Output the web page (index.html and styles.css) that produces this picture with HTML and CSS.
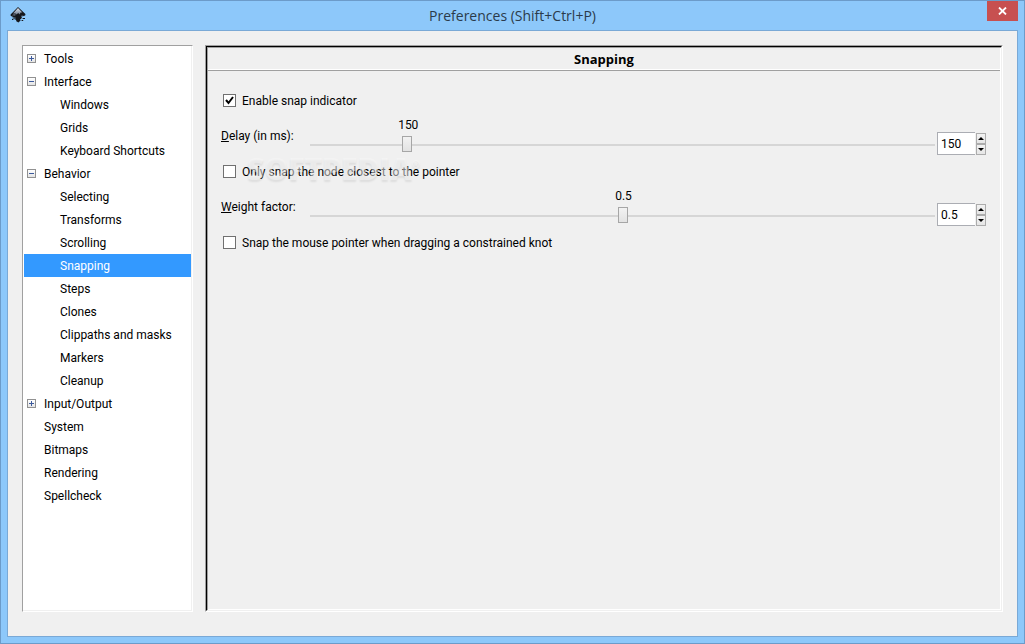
FILE: index.html
```
<!DOCTYPE html>
<html lang="en">
<head>
<meta charset="UTF-8">
<title>Preferences (Shift+Ctrl+P)</title>
<link rel="stylesheet" href="styles.css">
</head>
<body>
<div class="window">
  <header class="titlebar">
    <svg class="logo" viewBox="0 0 16 16" aria-hidden="true">
      <defs>
        <linearGradient id="peak" x1="0" y1="0" x2="0" y2="1">
          <stop offset="0" stop-color="#e4eaf4"/>
          <stop offset="1" stop-color="#6f7a8c"/>
        </linearGradient>
      </defs>
      <path fill="#15171c" d="M8 0 L15.4 7 Q16 8.6 14 9 L11 9.4 L12 10.6 L11 12 L10 12.2 L10.6 13.6 L8.4 15.6 L6 14 L6.4 13 L4 12 L6 11 L2 9.6 Q0 9 0.6 7.4 Z"/>
      <path fill="url(#peak)" d="M8 1 L12.4 5.4 L10.6 5.6 L9.6 7.4 L8.2 6 L6.6 7.6 L5.4 6.6 L3 6.6 Z"/>
      <path fill="#5d6676" d="M1.8 8.2 L4 7 L6 7.6 L5 8.8 Z M11 8 L14 8.2 L12 8.8 Z"/>
      <path fill="#15171c" d="M12.6 11 h2.4 v1 h-2.4 z M2 12 h1.4 v1 h-1.4 z M11.6 13 h1.6 v1 h-1.6 z M2.6 10.4 h2.4 v1 h-2.4 z"/>
    </svg>
    <h1>Preferences (Shift+Ctrl+P)</h1>
    <button class="close" aria-label="Close">
      <svg viewBox="0 0 9 8" width="9" height="8"><path d="M1 0.5 L8 7.5 M8 0.5 L1 7.5" stroke="#fff" stroke-width="1.8"/></svg>
    </button>
  </header>

  <div class="client">
    <nav class="tree">
      <ul>
        <li><div class="row"><button class="expander plus" aria-label="Expand Tools"></button><a href="#">Tools</a></div></li>
        <li>
          <div class="row"><button class="expander" aria-label="Collapse Interface"></button><a href="#">Interface</a></div>
          <ul>
            <li class="row child"><a href="#">Windows</a></li>
            <li class="row child"><a href="#">Grids</a></li>
            <li class="row child"><a href="#">Keyboard Shortcuts</a></li>
          </ul>
        </li>
        <li>
          <div class="row"><button class="expander" aria-label="Collapse Behavior"></button><a href="#">Behavior</a></div>
          <ul>
            <li class="row child"><a href="#">Selecting</a></li>
            <li class="row child"><a href="#">Transforms</a></li>
            <li class="row child"><a href="#">Scrolling</a></li>
            <li class="row child selected"><a href="#" aria-current="page">Snapping</a></li>
            <li class="row child"><a href="#">Steps</a></li>
            <li class="row child"><a href="#">Clones</a></li>
            <li class="row child"><a href="#">Clippaths and masks</a></li>
            <li class="row child"><a href="#">Markers</a></li>
            <li class="row child"><a href="#">Cleanup</a></li>
          </ul>
        </li>
        <li><div class="row"><button class="expander plus" aria-label="Expand Input/Output"></button><a href="#">Input/Output</a></div></li>
        <li class="row leaf"><a href="#">System</a></li>
        <li class="row leaf"><a href="#">Bitmaps</a></li>
        <li class="row leaf"><a href="#">Rendering</a></li>
        <li class="row leaf"><a href="#">Spellcheck</a></li>
      </ul>
    </nav>

    <main class="panel">
      <div class="panel-inner">
        <h2>Snapping</h2>
        <form class="settings">
          <div class="check">
            <input type="checkbox" id="indicator" checked>
            <label for="indicator">Enable snap indicator</label>
          </div>
          <div class="scale">
            <label for="delay"><u>D</u>elay (in ms):</label>
            <div class="slider" style="--pos: 0.15">
              <output for="delay">150</output>
              <input type="range" id="delay" min="0" max="1000" value="150">
            </div>
            <div class="spin">
              <input type="text" value="150" aria-label="Delay value">
              <div class="arrows">
                <button type="button" class="up" aria-label="Increase delay"></button>
                <button type="button" class="down" aria-label="Decrease delay"></button>
              </div>
            </div>
          </div>
          <div class="check">
            <input type="checkbox" id="closest">
            <label for="closest">Only snap the node closest to the pointer</label>
            <span class="watermark">SOFTPEDIA<sup>®</sup></span>
          </div>
          <div class="scale">
            <label for="weight"><u>W</u>eight factor:</label>
            <div class="slider" style="--pos: 0.5">
              <output for="weight">0.5</output>
              <input type="range" id="weight" min="0" max="1" step="0.01" value="0.5">
            </div>
            <div class="spin">
              <input type="text" value="0.5" aria-label="Weight value">
              <div class="arrows">
                <button type="button" class="up" aria-label="Increase weight"></button>
                <button type="button" class="down" aria-label="Decrease weight"></button>
              </div>
            </div>
          </div>
          <div class="check">
            <input type="checkbox" id="knot">
            <label for="knot">Snap the mouse pointer when dragging a constrained knot</label>
          </div>
        </form>
      </div>
    </main>
  </div>
</div>
</body>
</html>
```
FILE: styles.css
```
* {
  box-sizing: border-box;
}

body {
  margin: 0;
  font-family: Roboto, "Open Sans", sans-serif;
  font-size: 12px;
  line-height: 16px;
  color: #000;
}

button,
input {
  margin: 0;
  padding: 0;
  border: 0;
  font: inherit;
}

.window {
  display: flex;
  flex-direction: column;
  min-height: 100vh;
  padding: 0 6px 6px;
  border: 1px solid #6c9bc9;
  background: #8dc8fa;
}

.titlebar {
  display: grid;
  grid-template-columns: 31px 1fr 31px;
  height: 29px;
}

.logo {
  width: 16px;
  height: 16px;
  margin: 6px 0 0 3px;
}

.titlebar h1 {
  margin: 0;
  font-family: "Open Sans", sans-serif;
  font-size: 14px;
  font-weight: normal;
  line-height: 29px;
  text-align: center;
  color: #2b3b4a;
}

.close {
  display: flex;
  align-items: center;
  justify-content: center;
  height: 20px;
  background: #c75050;
}

/* client area */
.client {
  flex: 1;
  display: flex;
  gap: 12px;
  padding: 14px 14px 24px;
  border: 1px solid #7aa9d6;
  background: #f0f0f0;
}

.tree {
  width: 171px;
  padding: 1px;
  border: 1px solid #a0a0a0;
  border-right-color: #fff;
  border-bottom-color: #fff;
  background: #fff;
  box-shadow: inset -1px -1px #f0f0f0;
}

.tree ul {
  margin: 0;
  padding: 0;
  list-style: none;
}

.row {
  display: flex;
  align-items: center;
  height: 23px;
  padding-left: 3px;
}

.row a {
  color: #000;
  text-decoration: none;
}

.leaf {
  padding-left: 20px;
}

.child {
  padding-left: 36px;
}

.selected {
  background: #3399ff;
}

.selected a {
  color: #fff;
}

.expander {
  width: 9px;
  height: 9px;
  margin-right: 8px;
  border: 1px solid #919191;
  background:
    linear-gradient(#3c5a9c, #3c5a9c) center / 5px 1px no-repeat,
    linear-gradient(#fff, #e4e4e4);
}

.expander.plus {
  background:
    linear-gradient(#3c5a9c, #3c5a9c) center / 5px 1px no-repeat,
    linear-gradient(#3c5a9c, #3c5a9c) center / 1px 5px no-repeat,
    linear-gradient(#fff, #e4e4e4);
}

/* sunken frame */
.panel {
  flex: 1;
  display: flex;
  border: 1px solid #a0a0a0;
  border-right-color: #fff;
  border-bottom-color: #fff;
}

.panel-inner {
  flex: 1;
  border: 1px solid #000;
  border-right-color: #f0f0f0;
  border-bottom-color: #f0f0f0;
  box-shadow: inset 1px 1px #a0a0a0, inset -1px -1px #fff;
  padding: 1px;
}

.panel h2 {
  margin: 0;
  height: 23px;
  border-bottom: 1px solid #a0a0a0;
  box-shadow: inset 0 -1px #fff;
  font-family: "Open Sans", sans-serif;
  font-size: 13px;
  line-height: 22px;
  text-align: center;
}

.settings {
  padding: 19px 14px 0 13px;
}

.check {
  position: relative;
  display: flex;
  align-items: center;
  gap: 6px;
  height: 21px;
  padding-left: 2px;
}

.check input {
  appearance: none;
  width: 13px;
  height: 13px;
  border: 1px solid #707070;
  background: #fff;
}

.check input:checked {
  background: #fff url("data:image/svg+xml,%3Csvg xmlns='http://www.w3.org/2000/svg' viewBox='0 0 11 11'%3E%3Cpath d='M2 5 L4.5 8 L9 2' fill='none' stroke='black' stroke-width='2'/%3E%3C/svg%3E");
}

.watermark {
  position: absolute;
  left: 26px;
  top: -10px;
  font-family: "Open Sans", sans-serif;
  font-size: 30px;
  font-weight: 800;
  line-height: 36px;
  color: rgba(248, 248, 248, 0.5);
  text-shadow: 0 2px 2px rgba(0, 0, 0, 0.08);
  pointer-events: none;
}

.watermark sup {
  font-size: 10px;
  line-height: 10px;
  vertical-align: 12px;
}

.scale {
  display: grid;
  grid-template-columns: 87px 1fr 49px;
  column-gap: 2px;
  align-items: center;
  height: 50px;
}

.slider {
  position: relative;
  display: flex;
  padding-top: 16px;
}

.slider output {
  position: absolute;
  top: -3px;
  left: calc(6px + (100% - 10px) * var(--pos));
  transform: translateX(-50%);
}

.slider input {
  appearance: none;
  width: 100%;
  height: 16px;
  background: linear-gradient(#d6d6d6, #d6d6d6) 0 8px / 100% 2px no-repeat;
}

.slider input::-webkit-slider-thumb {
  appearance: none;
  width: 10px;
  height: 16px;
  border: 1px solid #a6a6a6;
  background: linear-gradient(#f2f2f2, #e2e2e2);
}

.spin {
  display: flex;
  align-items: center;
  padding-top: 15px;
}

.spin input {
  flex: 1;
  min-width: 0;
  height: 23px;
  padding-left: 3px;
  border: 1px solid #abadb3;
  border-right: 0;
  background: #fff;
}

.arrows {
  display: flex;
  flex-direction: column;
  margin-left: 1px;
}

.arrows button {
  display: flex;
  align-items: center;
  justify-content: center;
  width: 10px;
  height: 11px;
  border: 1px solid #acacac;
  background: linear-gradient(#f2f2f2, #e6e6e6);
}

.arrows button::before {
  content: "";
  border: 3px solid transparent;
}

.arrows .up::before {
  border-top: 0;
  border-bottom-color: #000;
}

.arrows .down::before {
  border-bottom: 0;
  border-top-color: #000;
}
```
